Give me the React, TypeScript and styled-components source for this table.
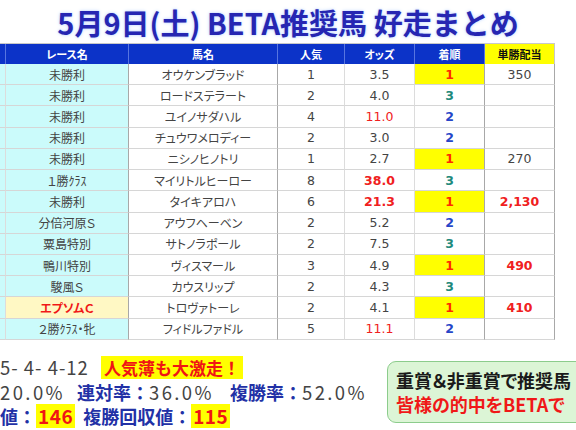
import styled, { createGlobalStyle } from "styled-components";

const GlobalStyle = createGlobalStyle`
  html, body {
    margin: 0;
    padding: 0;
    background: #fff;
  }
`;

const Page = styled.div`
  width: 576px;
  height: 430px;
  overflow: hidden;
  display: flex;
  flex-direction: column;
  font-family: "Noto Sans CJK JP", "Noto Sans", sans-serif;
  color: #444;
`;

const Title = styled.h1`
  margin: 0;
  height: 43px;
  display: flex;
  align-items: center;
  justify-content: center;
  font-size: 29px;
  font-weight: 700;
  color: #2626b2;
  text-shadow: 0 0 2px #b9d2ff, 0 0 4px #d6e4ff;
  white-space: nowrap;
`;

const Sheet = styled.div`
  display: grid;
  grid-template-columns: 6px 123px 149px 67px 70px 70px 70px;
  grid-template-rows: 20px repeat(13, 21.23px);
  width: 555px;
  border-top: 1px solid #c8c8c8;
`;

const HeadCell = styled.div<{ $gold?: boolean }>`
  box-sizing: border-box;
  display: flex;
  align-items: center;
  justify-content: center;
  background: ${(p) => (p.$gold ? "#ffff00" : "#0c33c8")};
  color: ${(p) => (p.$gold ? "#111" : "#fff")};
  border-right: 1px solid ${(p) => (p.$gold ? "#c8c8c8" : "#5775e0")};
  font-size: 11px;
  font-weight: 700;
  font-feature-settings: "palt";
  white-space: nowrap;
`;

const Cell = styled.div<{
  $bg?: string;
  $color?: string;
  $bold?: boolean;
  $edge?: "soft" | "hard";
  $num?: boolean;
}>`
  box-sizing: border-box;
  display: flex;
  align-items: center;
  justify-content: center;
  background: ${(p) => p.$bg || "#fff"};
  color: ${(p) => p.$color || "#444"};
  font-weight: ${(p) => (p.$bold ? 700 : 400)};
  font-family: ${(p) =>
    p.$num
      ? `"DejaVu Sans", "Noto Sans CJK JP", sans-serif`
      : `"Noto Sans CJK JP", sans-serif`};
  font-size: ${(p) => (p.$num ? "12.5px" : "12px")};
  font-feature-settings: "palt";
  border-bottom: 1px solid #d6d6d6;
  border-right: 1px solid ${(p) => (p.$edge === "hard" ? "#a8a8a8" : "#dcdcdc")};
  white-space: nowrap;
`;

const Bottom = styled.div`
  display: flex;
  align-items: flex-start;
  margin-top: 15px;
`;

const Stats = styled.div`
  flex: 0 0 387px;
  display: flex;
  flex-direction: column;
`;

const StatLine = styled.div<{ $gap?: number }>`
  height: 24.5px;
  display: flex;
  align-items: center;
  gap: ${(p) => p.$gap ?? 0}px;
  white-space: nowrap;
`;

const Num = styled.span<{ $tight?: boolean }>`
  font-size: 18.5px;
  color: #444;
  letter-spacing: ${(p) => (p.$tight ? 1 : 2.4)}px;
`;

const Label = styled.span<{ $lead?: number }>`
  font-size: 18px;
  font-weight: 700;
  color: #2231a6;
  margin-left: ${(p) => p.$lead ?? 0}px;
`;

const Badge = styled.span`
  background: #ffff00;
  color: #f01414;
  font-size: 17px;
  font-weight: 700;
  padding: 0 3px;
  line-height: 23px;
`;

const Hit = styled.span`
  background: #ffff00;
  color: #f01414;
  font-size: 19px;
  font-weight: 700;
  padding: 0 2px;
  line-height: 24px;
  letter-spacing: 0.5px;
`;

const Notice = styled.div`
  flex: 0 0 auto;
  margin-top: 6px;
  padding: 6px 30px 6px 8px;
  border: 1px solid #8ccc8c;
  border-radius: 9px;
  background: #dcf5d6;
  white-space: nowrap;
`;

const NoticeLine = styled.div<{ $red?: boolean }>`
  font-size: 18px;
  font-weight: 700;
  line-height: 24px;
  color: ${(p) => (p.$red ? "#f01818" : "#1a1a1a")};
  font-feature-settings: "palt";
`;

type Row = {
  race: string;
  horse: string;
  pop: string;
  odds: string;
  oddsStyle?: "red" | "redBold";
  rank: 1 | 2 | 3;
  pay?: string;
  payRed?: boolean;
  grade?: boolean;
};

const rows: Row[] = [
  { race: "未勝利", horse: "オウケンブラッド", pop: "1", odds: "3.5", rank: 1, pay: "350" },
  { race: "未勝利", horse: "ロードステラート", pop: "2", odds: "4.0", rank: 3 },
  { race: "未勝利", horse: "ユイノサダハル", pop: "4", odds: "11.0", oddsStyle: "red", rank: 2 },
  { race: "未勝利", horse: "チュウワメロディー", pop: "2", odds: "3.0", rank: 2 },
  { race: "未勝利", horse: "ニシノヒノトリ", pop: "1", odds: "2.7", rank: 1, pay: "270" },
  { race: "１勝ｸﾗｽ", horse: "マイリトルヒーロー", pop: "8", odds: "38.0", oddsStyle: "redBold", rank: 3 },
  { race: "未勝利", horse: "タイキアロハ", pop: "6", odds: "21.3", oddsStyle: "redBold", rank: 1, pay: "2,130", payRed: true },
  { race: "分倍河原Ｓ", horse: "アウフヘーベン", pop: "2", odds: "5.2", rank: 2 },
  { race: "粟島特別", horse: "サトノラポール", pop: "2", odds: "7.5", rank: 3 },
  { race: "鴨川特別", horse: "ヴィスマール", pop: "3", odds: "4.9", rank: 1, pay: "490", payRed: true },
  { race: "駿風Ｓ", horse: "カウスリップ", pop: "2", odds: "4.3", rank: 3 },
  { race: "エプソムＣ", horse: "トロヴァトーレ", pop: "2", odds: "4.1", rank: 1, pay: "410", payRed: true, grade: true },
  { race: "２勝ｸﾗｽ・牝", horse: "フィドルファドル", pop: "5", odds: "11.1", oddsStyle: "red", rank: 2 },
];

const rankColor = { 1: "#ff2a00", 2: "#2646c8", 3: "#1f8a7c" };

export default function App() {
  return (
    <Page>
      <GlobalStyle />
      <Title>5月9日(土) BETA推奨馬 好走まとめ</Title>
      <Sheet>
        <HeadCell />
        <HeadCell>レース名</HeadCell>
        <HeadCell>馬名</HeadCell>
        <HeadCell>人気</HeadCell>
        <HeadCell>オッズ</HeadCell>
        <HeadCell>着順</HeadCell>
        <HeadCell $gold>単勝配当</HeadCell>
        {rows.map((r, i) => [
          <Cell key={`e${i}`} $bg="#cbfbfb" />,
          <Cell
            key={`r${i}`}
            $bg={r.grade ? "#fff8c4" : "#cbfbfb"}
            $color={r.grade ? "#f01818" : "#444"}
            $bold={r.grade}
            $edge="hard"
          >
            {r.race}
          </Cell>,
          <Cell key={`h${i}`} $edge="hard">
            {r.horse}
          </Cell>,
          <Cell key={`p${i}`} $num>
            {r.pop}
          </Cell>,
          <Cell
            key={`o${i}`}
            $num
            $color={r.oddsStyle ? "#f02020" : "#444"}
            $bold={r.oddsStyle === "redBold"}
          >
            {r.odds}
          </Cell>,
          <Cell
            key={`k${i}`}
            $num
            $bold
            $edge="hard"
            $bg={r.rank === 1 ? "#ffff00" : "#fff"}
            $color={rankColor[r.rank]}
          >
            {r.rank}
          </Cell>,
          <Cell
            key={`y${i}`}
            $num
            $bold={r.payRed}
            $color={r.payRed ? "#f02020" : "#444"}
            $edge="hard"
          >
            {r.pay ?? ""}
          </Cell>,
        ])}
      </Sheet>
      <Bottom>
        <Stats>
          <StatLine $gap={12}>
            <Num $tight>5- 4- 4-12</Num>
            <Badge>人気薄も大激走！</Badge>
          </StatLine>
          <StatLine>
            <Num>20.0%</Num>
            <Label $lead={12}>連対率：</Label>
            <Num>36.0%</Num>
            <Label $lead={16}>複勝率：</Label>
            <Num>52.0%</Num>
          </StatLine>
          <StatLine>
            <Label>値：</Label>
            <Hit>146</Hit>
            <Label $lead={8}>複勝回収値：</Label>
            <Hit>115</Hit>
          </StatLine>
        </Stats>
        <Notice>
          <NoticeLine>重賞＆非重賞で推奨馬</NoticeLine>
          <NoticeLine $red>皆様の的中をBETAで</NoticeLine>
        </Notice>
      </Bottom>
    </Page>
  );
}
